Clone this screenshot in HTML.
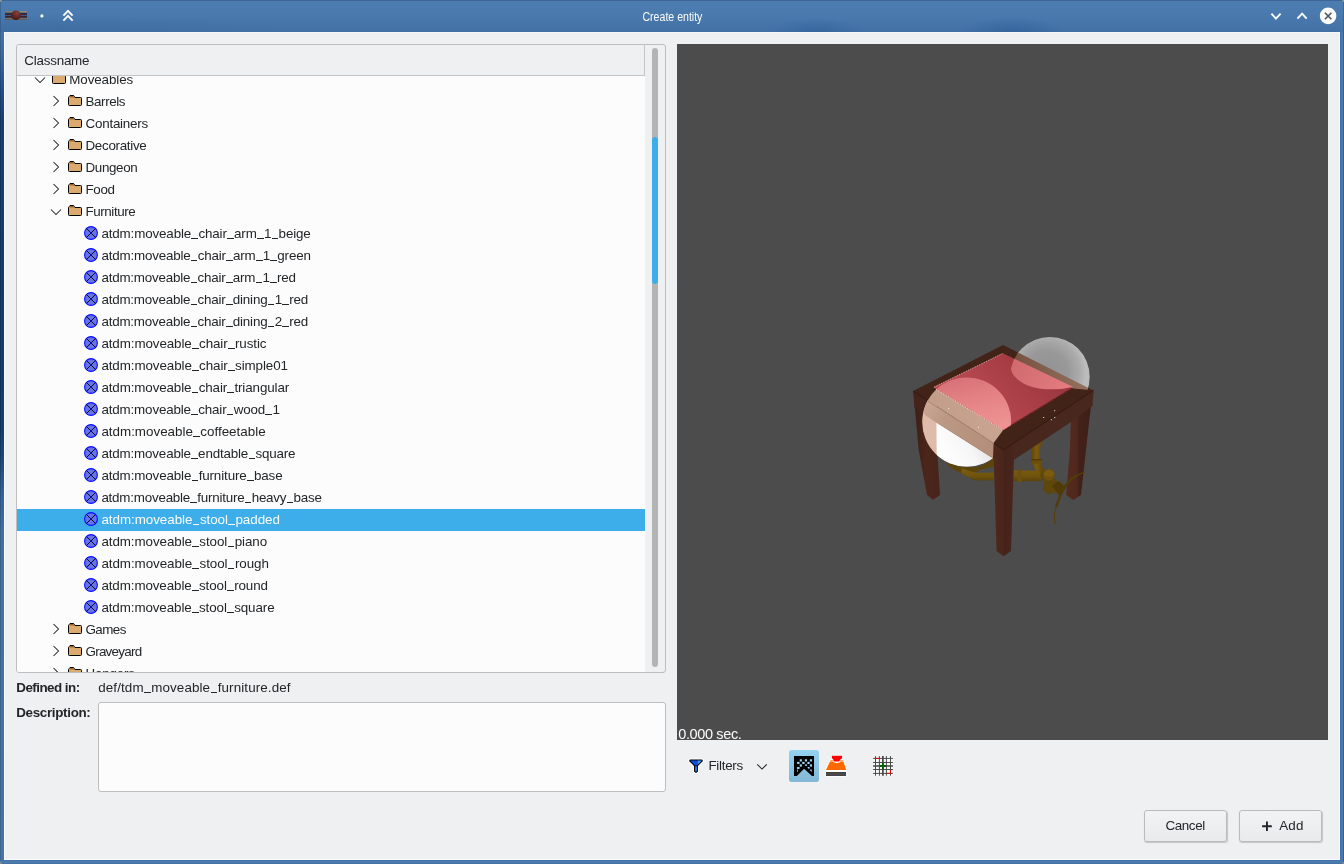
<!DOCTYPE html>
<html>
<head>
<meta charset="utf-8">
<title>Create entity</title>
<style>
html,body{margin:0;padding:0;}
body{width:1344px;height:864px;overflow:hidden;background:#eff0f1;font-family:"Liberation Sans",sans-serif;font-size:13.4px;color:#232629;position:relative;}
.abs{position:absolute;}
#frame{left:0;top:0;width:1344px;height:864px;background:#4877ab;}
#bl{left:0;top:32px;width:4px;height:832px;background:linear-gradient(180deg,#4674a9 0px,#3a679c 25px,#23508a 55px,#163e72 90px,#133a6c 250px,#143c6e 395px,#1d477b 425px,#34639a 465px,#4270a4 500px,#4674a8 832px);}
#bl2{left:0;top:32px;width:1.3px;height:832px;background:rgba(0,0,0,0.13);}
#bb{left:0;top:860px;width:1344px;height:4px;background:linear-gradient(180deg,#3f70a6 0,#4b7db1 45%,#4a7bae 70%,#3f6a99 100%);}
#br{left:1340.2px;top:32px;width:3.8px;height:830px;background:linear-gradient(90deg,#3d6ea6 0,#4679ae 35%,#4a7bb0 60%,#3f6898 100%);}
#titlebar{left:0;top:0;width:1344px;height:32px;background:
radial-gradient(ellipse 46px 15px at 816px 33px,rgba(52,100,158,0.85),rgba(52,100,158,0) 100%),
radial-gradient(ellipse 52px 17px at 1012px 34px,rgba(50,98,156,0.9),rgba(50,98,156,0) 100%),
radial-gradient(ellipse 230px 22px at 60px 36px,rgba(58,103,156,0.55),rgba(58,103,156,0) 100%),
linear-gradient(180deg,#4c7cb0 0%,#4a7aae 40%,#4675aa 75%,#4371a5 100%);}
#titletop{left:0;top:0;width:1344px;height:1px;background:#3d6697;}
#ol{left:0;top:0;width:1px;height:32px;background:rgba(40,70,110,0.35);}
#or{left:1343px;top:0;width:1px;height:864px;background:rgba(40,70,110,0.4);}
.cn{width:2.4px;height:2.4px;}
#client{left:4px;top:32px;width:1336.2px;height:828px;background:#eff0f1;box-sizing:border-box;border:1px solid #fbfbfb;border-top-color:#f6f7f8;}
#title{left:0.1px;top:10.3px;width:1344px;text-align:center;color:#fcfcfc;font-size:12.5px;line-height:15px;}
#title span{display:inline-block;transform:scaleX(0.846);transform-origin:50% 50%;}
/* tree */
#tree{left:16px;top:44px;width:648px;height:627px;border:1px solid #bcbebf;border-radius:3px;background:#eff0f1;overflow:hidden;}
#treebody{left:0;top:31px;width:628px;height:596px;background:#fcfcfc;overflow:hidden;}
#treehead{left:0;top:0;width:627px;height:30px;border-right:1px solid #c2c4c5;border-bottom:1px solid #c2c4c5;background:#eff0f1;}
#treehead span{position:absolute;left:7.25px;top:8px;line-height:16px;}
.row{position:absolute;left:0;width:628px;height:22px;line-height:22px;white-space:nowrap;}
.row.sel{background:#3daee9;color:#fcfcfc;}
.row .t{position:absolute;top:0;}
.row svg{position:absolute;}
.u{font-style:normal;color:transparent;position:relative;}
.u::after{content:"";position:absolute;left:0.35px;width:6.6px;top:11.9px;height:1.1px;background:#232629;}
.sel .u::after{background:#fcfcfc;}
#t_path .u::after{top:11.9px;}
#sbtrack{left:635px;top:3.4px;width:6px;height:619px;border-radius:3px;background:#b3b5b5;}
#sbthumb{left:635px;top:92px;width:6px;height:147px;border-radius:3px;background:#3daee9;}
/* lower-left */
.lbl{font-weight:bold;line-height:16px;}
#desc{left:98px;top:702px;width:566px;height:88px;border:1px solid #bcbebf;border-radius:3px;background:#fcfcfc;}
/* preview */
#preview{left:677px;top:44px;width:651px;height:696px;background:#4c4c4c;overflow:hidden;}
#sec{left:1.2px;top:682.2px;color:#fcfcfc;font-size:14.5px;line-height:16px;}
/* buttons */
.btn{height:30px;width:81px;box-sizing:content-box;border:1px solid #b9bbbc;border-radius:3px;background:linear-gradient(180deg,#f2f3f4,#e9eaeb);box-shadow:0.5px 1px 1px rgba(0,0,0,0.18);line-height:30px;text-align:center;}
/*FIT*/#t_class{letter-spacing:-0.217px;}#t_def{letter-spacing:-0.534px;}#t_path{letter-spacing:0.108px;}#t_desc{letter-spacing:-0.325px;}#t_cancel{letter-spacing:-0.378px;}#t_add{letter-spacing:0.236px;}#t_filters{letter-spacing:-0.276px;}#sec{letter-spacing:-0.358px;}/*ENDFIT*/
</style>
</head>
<body>
<div id="frame" class="abs"></div>
<div id="all" class="abs" style="left:0;top:0;width:1344px;height:864px;will-change:transform;">
<div id="bl" class="abs"></div><div id="bl2" class="abs"></div><div id="br" class="abs"></div><div id="bb" class="abs"></div>
<div id="titlebar" class="abs"></div>
<div id="titletop" class="abs"></div>
<div id="ol" class="abs"></div><div id="or" class="abs"></div>
<div class="abs cn" style="left:0;top:0;background:radial-gradient(circle at 0 0,#9a958e 0,#9a958e 40%,rgba(154,149,142,0) 100%);"></div>
<div class="abs cn" style="left:1341.6px;top:0;background:radial-gradient(circle at 100% 0,#9a958e 0,#9a958e 40%,rgba(154,149,142,0) 100%);"></div>
<div class="abs cn" style="left:0;top:861.6px;background:radial-gradient(circle at 0 100%,#8e8a84 0,#8e8a84 40%,rgba(142,138,132,0) 100%);"></div>
<div class="abs cn" style="left:1341.6px;top:861.6px;background:radial-gradient(circle at 100% 100%,#8e8a84 0,#8e8a84 40%,rgba(142,138,132,0) 100%);"></div>
<div id="client" class="abs"></div>
<svg class="abs" style="left:0;top:0" width="1344" height="32" viewBox="0 0 1344 32">
<defs><radialGradient id="ball" cx="0.6" cy="0.25" r="0.8"><stop offset="0" stop-color="#87423d"/><stop offset="0.45" stop-color="#6a2c29"/><stop offset="1" stop-color="#3f1614"/></radialGradient></defs>
<g>
<rect x="5.2" y="11" width="21.7" height="8.9" fill="#343a52"/>
<rect x="5.2" y="11" width="21.7" height="1.95" fill="#73746e"/>
<rect x="5.2" y="11" width="21.7" height="0.7" fill="#7f807a"/>
<rect x="20.3" y="11" width="6.6" height="1.3" fill="#8c8c85"/>
<rect x="5.2" y="17.7" width="21.7" height="2.2" fill="#70716b"/>
<rect x="5.2" y="19.3" width="21.7" height="0.6" fill="#575853"/>
<rect x="5.2" y="12.95" width="21.7" height="1.1" fill="#262e4a"/>
<rect x="5.2" y="14.05" width="21.7" height="0.85" fill="#4d1c23"/>
<rect x="5.2" y="14.9" width="21.7" height="1.1" fill="#3a588c"/>
<rect x="5.2" y="16" width="21.7" height="0.95" fill="#4d1c23"/>
<rect x="5.2" y="16.95" width="21.7" height="0.75" fill="#2b3654"/>
<circle cx="15.9" cy="15.3" r="4.75" fill="url(#ball)"/>
</g>
<circle cx="41.9" cy="15.9" r="1.6" fill="#fcfcfc"/>
<path d="M63.4 15.6 L68 10.9 L72.6 15.6 M63.4 20.6 L68 15.9 L72.6 20.6" stroke="#fcfcfc" stroke-width="1.9" fill="none"/>
<path d="M1271.4 13.6 L1275.9 18.6 L1280.6 13.6" stroke="#fcfcfc" stroke-width="1.9" fill="none"/>
<path d="M1297.4 18.6 L1302.1 13.7 L1306.7 18.6" stroke="#fcfcfc" stroke-width="1.9" fill="none"/>
<circle cx="1328.1" cy="15.9" r="8.3" fill="#fcfcfc"/>
<path d="M1324.9 12.8 L1331.4 19.2 M1331.4 12.8 L1324.9 19.2" stroke="#4d5054" stroke-width="1.6" fill="none"/>
</svg>
<div id="title" class="abs"><span>Create entity</span></div>

<div id="tree" class="abs">
  <div id="treebody" class="abs"><!--ROWS-->
<div class="row" style="top:-7px"><svg style="left:17.200000000000003px;top:6.5px" width="12" height="8" viewBox="0 0 12 8"><path d="M1 1.5 L6 6.5 L11 1.5" stroke="#232629" stroke-width="1.05" fill="none"/></svg><svg style="left:34.5px;top:4px" width="14" height="12" viewBox="0 0 14 12"><path d="M0.5 2.6 Q0.5 2 1.2 1.6 L2 0.5 H5.6 L6.9 2.5 H12.6 Q13.5 2.5 13.5 3.4 V9.6 Q13.5 10.5 12.6 10.5 H1.4 Q0.5 10.5 0.5 9.6 Z" fill="#dcaa6e" stroke="#000" stroke-width="1"/><path d="M1.6 2.2 L2.4 1.1 H5.3 L6.2 2.6 H1.6 Z" fill="#9c6424"/></svg><span class="t" style="left:52.25px;letter-spacing:-0.096px">Moveables</span></div>
<div class="row" style="top:15px"><svg style="left:35.1px;top:4px" width="8" height="12" viewBox="0 0 8 12"><path d="M1.5 1 L6.5 6 L1.5 11" stroke="#232629" stroke-width="1.05" fill="none"/></svg><svg style="left:51px;top:4px" width="14" height="12" viewBox="0 0 14 12"><path d="M0.5 2.6 Q0.5 2 1.2 1.6 L2 0.5 H5.6 L6.9 2.5 H12.6 Q13.5 2.5 13.5 3.4 V9.6 Q13.5 10.5 12.6 10.5 H1.4 Q0.5 10.5 0.5 9.6 Z" fill="#dcaa6e" stroke="#000" stroke-width="1"/><path d="M1.6 2.2 L2.4 1.1 H5.3 L6.2 2.6 H1.6 Z" fill="#9c6424"/></svg><span class="t" style="left:68.50px;letter-spacing:-0.404px">Barrels</span></div>
<div class="row" style="top:37px"><svg style="left:35.1px;top:4px" width="8" height="12" viewBox="0 0 8 12"><path d="M1.5 1 L6.5 6 L1.5 11" stroke="#232629" stroke-width="1.05" fill="none"/></svg><svg style="left:51px;top:4px" width="14" height="12" viewBox="0 0 14 12"><path d="M0.5 2.6 Q0.5 2 1.2 1.6 L2 0.5 H5.6 L6.9 2.5 H12.6 Q13.5 2.5 13.5 3.4 V9.6 Q13.5 10.5 12.6 10.5 H1.4 Q0.5 10.5 0.5 9.6 Z" fill="#dcaa6e" stroke="#000" stroke-width="1"/><path d="M1.6 2.2 L2.4 1.1 H5.3 L6.2 2.6 H1.6 Z" fill="#9c6424"/></svg><span class="t" style="left:68.50px;letter-spacing:-0.224px">Containers</span></div>
<div class="row" style="top:59px"><svg style="left:35.1px;top:4px" width="8" height="12" viewBox="0 0 8 12"><path d="M1.5 1 L6.5 6 L1.5 11" stroke="#232629" stroke-width="1.05" fill="none"/></svg><svg style="left:51px;top:4px" width="14" height="12" viewBox="0 0 14 12"><path d="M0.5 2.6 Q0.5 2 1.2 1.6 L2 0.5 H5.6 L6.9 2.5 H12.6 Q13.5 2.5 13.5 3.4 V9.6 Q13.5 10.5 12.6 10.5 H1.4 Q0.5 10.5 0.5 9.6 Z" fill="#dcaa6e" stroke="#000" stroke-width="1"/><path d="M1.6 2.2 L2.4 1.1 H5.3 L6.2 2.6 H1.6 Z" fill="#9c6424"/></svg><span class="t" style="left:68.50px;letter-spacing:-0.307px">Decorative</span></div>
<div class="row" style="top:81px"><svg style="left:35.1px;top:4px" width="8" height="12" viewBox="0 0 8 12"><path d="M1.5 1 L6.5 6 L1.5 11" stroke="#232629" stroke-width="1.05" fill="none"/></svg><svg style="left:51px;top:4px" width="14" height="12" viewBox="0 0 14 12"><path d="M0.5 2.6 Q0.5 2 1.2 1.6 L2 0.5 H5.6 L6.9 2.5 H12.6 Q13.5 2.5 13.5 3.4 V9.6 Q13.5 10.5 12.6 10.5 H1.4 Q0.5 10.5 0.5 9.6 Z" fill="#dcaa6e" stroke="#000" stroke-width="1"/><path d="M1.6 2.2 L2.4 1.1 H5.3 L6.2 2.6 H1.6 Z" fill="#9c6424"/></svg><span class="t" style="left:68.50px;letter-spacing:-0.352px">Dungeon</span></div>
<div class="row" style="top:103px"><svg style="left:35.1px;top:4px" width="8" height="12" viewBox="0 0 8 12"><path d="M1.5 1 L6.5 6 L1.5 11" stroke="#232629" stroke-width="1.05" fill="none"/></svg><svg style="left:51px;top:4px" width="14" height="12" viewBox="0 0 14 12"><path d="M0.5 2.6 Q0.5 2 1.2 1.6 L2 0.5 H5.6 L6.9 2.5 H12.6 Q13.5 2.5 13.5 3.4 V9.6 Q13.5 10.5 12.6 10.5 H1.4 Q0.5 10.5 0.5 9.6 Z" fill="#dcaa6e" stroke="#000" stroke-width="1"/><path d="M1.6 2.2 L2.4 1.1 H5.3 L6.2 2.6 H1.6 Z" fill="#9c6424"/></svg><span class="t" style="left:68.50px;letter-spacing:-0.344px">Food</span></div>
<div class="row" style="top:125px"><svg style="left:32.7px;top:6.5px" width="12" height="8" viewBox="0 0 12 8"><path d="M1 1.5 L6 6.5 L11 1.5" stroke="#232629" stroke-width="1.05" fill="none"/></svg><svg style="left:51px;top:4px" width="14" height="12" viewBox="0 0 14 12"><path d="M0.5 2.6 Q0.5 2 1.2 1.6 L2 0.5 H5.6 L6.9 2.5 H12.6 Q13.5 2.5 13.5 3.4 V9.6 Q13.5 10.5 12.6 10.5 H1.4 Q0.5 10.5 0.5 9.6 Z" fill="#dcaa6e" stroke="#000" stroke-width="1"/><path d="M1.6 2.2 L2.4 1.1 H5.3 L6.2 2.6 H1.6 Z" fill="#9c6424"/></svg><span class="t" style="left:68.50px;letter-spacing:-0.418px">Furniture</span></div>
<div class="row" style="top:147px"><svg style="left:67px;top:3px" width="14" height="14" viewBox="0 0 14 14"><circle cx="7" cy="7" r="6.4" fill="#6674ea" stroke="#0a0aff" stroke-width="1.1"/><path d="M2.6 2.6 L11.4 11.4 M11.4 2.6 L2.6 11.4" stroke="#000" stroke-width="0.9" fill="none"/><rect x="6.3" y="6.3" width="1.4" height="1.4" fill="#0a0aff"/></svg><span class="t" style="left:84.40px;letter-spacing:-0.143px">atdm:moveable<i class="u">_</i>chair<i class="u">_</i>arm<i class="u">_</i>1<i class="u">_</i>beige</span></div>
<div class="row" style="top:169px"><svg style="left:67px;top:3px" width="14" height="14" viewBox="0 0 14 14"><circle cx="7" cy="7" r="6.4" fill="#6674ea" stroke="#0a0aff" stroke-width="1.1"/><path d="M2.6 2.6 L11.4 11.4 M11.4 2.6 L2.6 11.4" stroke="#000" stroke-width="0.9" fill="none"/><rect x="6.3" y="6.3" width="1.4" height="1.4" fill="#0a0aff"/></svg><span class="t" style="left:84.40px;letter-spacing:-0.192px">atdm:moveable<i class="u">_</i>chair<i class="u">_</i>arm<i class="u">_</i>1<i class="u">_</i>green</span></div>
<div class="row" style="top:191px"><svg style="left:67px;top:3px" width="14" height="14" viewBox="0 0 14 14"><circle cx="7" cy="7" r="6.4" fill="#6674ea" stroke="#0a0aff" stroke-width="1.1"/><path d="M2.6 2.6 L11.4 11.4 M11.4 2.6 L2.6 11.4" stroke="#000" stroke-width="0.9" fill="none"/><rect x="6.3" y="6.3" width="1.4" height="1.4" fill="#0a0aff"/></svg><span class="t" style="left:84.40px;letter-spacing:-0.203px">atdm:moveable<i class="u">_</i>chair<i class="u">_</i>arm<i class="u">_</i>1<i class="u">_</i>red</span></div>
<div class="row" style="top:213px"><svg style="left:67px;top:3px" width="14" height="14" viewBox="0 0 14 14"><circle cx="7" cy="7" r="6.4" fill="#6674ea" stroke="#0a0aff" stroke-width="1.1"/><path d="M2.6 2.6 L11.4 11.4 M11.4 2.6 L2.6 11.4" stroke="#000" stroke-width="0.9" fill="none"/><rect x="6.3" y="6.3" width="1.4" height="1.4" fill="#0a0aff"/></svg><span class="t" style="left:84.40px;letter-spacing:-0.202px">atdm:moveable<i class="u">_</i>chair<i class="u">_</i>dining<i class="u">_</i>1<i class="u">_</i>red</span></div>
<div class="row" style="top:235px"><svg style="left:67px;top:3px" width="14" height="14" viewBox="0 0 14 14"><circle cx="7" cy="7" r="6.4" fill="#6674ea" stroke="#0a0aff" stroke-width="1.1"/><path d="M2.6 2.6 L11.4 11.4 M11.4 2.6 L2.6 11.4" stroke="#000" stroke-width="0.9" fill="none"/><rect x="6.3" y="6.3" width="1.4" height="1.4" fill="#0a0aff"/></svg><span class="t" style="left:84.40px;letter-spacing:-0.202px">atdm:moveable<i class="u">_</i>chair<i class="u">_</i>dining<i class="u">_</i>2<i class="u">_</i>red</span></div>
<div class="row" style="top:257px"><svg style="left:67px;top:3px" width="14" height="14" viewBox="0 0 14 14"><circle cx="7" cy="7" r="6.4" fill="#6674ea" stroke="#0a0aff" stroke-width="1.1"/><path d="M2.6 2.6 L11.4 11.4 M11.4 2.6 L2.6 11.4" stroke="#000" stroke-width="0.9" fill="none"/><rect x="6.3" y="6.3" width="1.4" height="1.4" fill="#0a0aff"/></svg><span class="t" style="left:84.40px;letter-spacing:-0.096px">atdm:moveable<i class="u">_</i>chair<i class="u">_</i>rustic</span></div>
<div class="row" style="top:279px"><svg style="left:67px;top:3px" width="14" height="14" viewBox="0 0 14 14"><circle cx="7" cy="7" r="6.4" fill="#6674ea" stroke="#0a0aff" stroke-width="1.1"/><path d="M2.6 2.6 L11.4 11.4 M11.4 2.6 L2.6 11.4" stroke="#000" stroke-width="0.9" fill="none"/><rect x="6.3" y="6.3" width="1.4" height="1.4" fill="#0a0aff"/></svg><span class="t" style="left:84.40px;letter-spacing:-0.092px">atdm:moveable<i class="u">_</i>chair<i class="u">_</i>simple01</span></div>
<div class="row" style="top:301px"><svg style="left:67px;top:3px" width="14" height="14" viewBox="0 0 14 14"><circle cx="7" cy="7" r="6.4" fill="#6674ea" stroke="#0a0aff" stroke-width="1.1"/><path d="M2.6 2.6 L11.4 11.4 M11.4 2.6 L2.6 11.4" stroke="#000" stroke-width="0.9" fill="none"/><rect x="6.3" y="6.3" width="1.4" height="1.4" fill="#0a0aff"/></svg><span class="t" style="left:84.40px;letter-spacing:-0.122px">atdm:moveable<i class="u">_</i>chair<i class="u">_</i>triangular</span></div>
<div class="row" style="top:323px"><svg style="left:67px;top:3px" width="14" height="14" viewBox="0 0 14 14"><circle cx="7" cy="7" r="6.4" fill="#6674ea" stroke="#0a0aff" stroke-width="1.1"/><path d="M2.6 2.6 L11.4 11.4 M11.4 2.6 L2.6 11.4" stroke="#000" stroke-width="0.9" fill="none"/><rect x="6.3" y="6.3" width="1.4" height="1.4" fill="#0a0aff"/></svg><span class="t" style="left:84.40px;letter-spacing:-0.157px">atdm:moveable<i class="u">_</i>chair<i class="u">_</i>wood<i class="u">_</i>1</span></div>
<div class="row" style="top:345px"><svg style="left:67px;top:3px" width="14" height="14" viewBox="0 0 14 14"><circle cx="7" cy="7" r="6.4" fill="#6674ea" stroke="#0a0aff" stroke-width="1.1"/><path d="M2.6 2.6 L11.4 11.4 M11.4 2.6 L2.6 11.4" stroke="#000" stroke-width="0.9" fill="none"/><rect x="6.3" y="6.3" width="1.4" height="1.4" fill="#0a0aff"/></svg><span class="t" style="left:84.40px;letter-spacing:-0.004px">atdm:moveable<i class="u">_</i>coffeetable</span></div>
<div class="row" style="top:367px"><svg style="left:67px;top:3px" width="14" height="14" viewBox="0 0 14 14"><circle cx="7" cy="7" r="6.4" fill="#6674ea" stroke="#0a0aff" stroke-width="1.1"/><path d="M2.6 2.6 L11.4 11.4 M11.4 2.6 L2.6 11.4" stroke="#000" stroke-width="0.9" fill="none"/><rect x="6.3" y="6.3" width="1.4" height="1.4" fill="#0a0aff"/></svg><span class="t" style="left:84.40px;letter-spacing:-0.165px">atdm:moveable<i class="u">_</i>endtable<i class="u">_</i>square</span></div>
<div class="row" style="top:389px"><svg style="left:67px;top:3px" width="14" height="14" viewBox="0 0 14 14"><circle cx="7" cy="7" r="6.4" fill="#6674ea" stroke="#0a0aff" stroke-width="1.1"/><path d="M2.6 2.6 L11.4 11.4 M11.4 2.6 L2.6 11.4" stroke="#000" stroke-width="0.9" fill="none"/><rect x="6.3" y="6.3" width="1.4" height="1.4" fill="#0a0aff"/></svg><span class="t" style="left:84.40px;letter-spacing:-0.127px">atdm:moveable<i class="u">_</i>furniture<i class="u">_</i>base</span></div>
<div class="row" style="top:411px"><svg style="left:67px;top:3px" width="14" height="14" viewBox="0 0 14 14"><circle cx="7" cy="7" r="6.4" fill="#6674ea" stroke="#0a0aff" stroke-width="1.1"/><path d="M2.6 2.6 L11.4 11.4 M11.4 2.6 L2.6 11.4" stroke="#000" stroke-width="0.9" fill="none"/><rect x="6.3" y="6.3" width="1.4" height="1.4" fill="#0a0aff"/></svg><span class="t" style="left:84.40px;letter-spacing:-0.222px">atdm:moveable<i class="u">_</i>furniture<i class="u">_</i>heavy<i class="u">_</i>base</span></div>
<div class="row sel" style="top:433px"><svg style="left:67px;top:3px" width="14" height="14" viewBox="0 0 14 14"><circle cx="7" cy="7" r="6.4" fill="#6674ea" stroke="#0a0aff" stroke-width="1.1"/><path d="M2.6 2.6 L11.4 11.4 M11.4 2.6 L2.6 11.4" stroke="#000" stroke-width="0.9" fill="none"/><rect x="6.3" y="6.3" width="1.4" height="1.4" fill="#0a0aff"/></svg><span class="t" style="left:84.40px;letter-spacing:-0.038px">atdm:moveable<i class="u">_</i>stool<i class="u">_</i>padded</span></div>
<div class="row" style="top:455px"><svg style="left:67px;top:3px" width="14" height="14" viewBox="0 0 14 14"><circle cx="7" cy="7" r="6.4" fill="#6674ea" stroke="#0a0aff" stroke-width="1.1"/><path d="M2.6 2.6 L11.4 11.4 M11.4 2.6 L2.6 11.4" stroke="#000" stroke-width="0.9" fill="none"/><rect x="6.3" y="6.3" width="1.4" height="1.4" fill="#0a0aff"/></svg><span class="t" style="left:84.40px;letter-spacing:-0.076px">atdm:moveable<i class="u">_</i>stool<i class="u">_</i>piano</span></div>
<div class="row" style="top:477px"><svg style="left:67px;top:3px" width="14" height="14" viewBox="0 0 14 14"><circle cx="7" cy="7" r="6.4" fill="#6674ea" stroke="#0a0aff" stroke-width="1.1"/><path d="M2.6 2.6 L11.4 11.4 M11.4 2.6 L2.6 11.4" stroke="#000" stroke-width="0.9" fill="none"/><rect x="6.3" y="6.3" width="1.4" height="1.4" fill="#0a0aff"/></svg><span class="t" style="left:84.40px;letter-spacing:-0.063px">atdm:moveable<i class="u">_</i>stool<i class="u">_</i>rough</span></div>
<div class="row" style="top:499px"><svg style="left:67px;top:3px" width="14" height="14" viewBox="0 0 14 14"><circle cx="7" cy="7" r="6.4" fill="#6674ea" stroke="#0a0aff" stroke-width="1.1"/><path d="M2.6 2.6 L11.4 11.4 M11.4 2.6 L2.6 11.4" stroke="#000" stroke-width="0.9" fill="none"/><rect x="6.3" y="6.3" width="1.4" height="1.4" fill="#0a0aff"/></svg><span class="t" style="left:84.40px;letter-spacing:-0.101px">atdm:moveable<i class="u">_</i>stool<i class="u">_</i>round</span></div>
<div class="row" style="top:521px"><svg style="left:67px;top:3px" width="14" height="14" viewBox="0 0 14 14"><circle cx="7" cy="7" r="6.4" fill="#6674ea" stroke="#0a0aff" stroke-width="1.1"/><path d="M2.6 2.6 L11.4 11.4 M11.4 2.6 L2.6 11.4" stroke="#000" stroke-width="0.9" fill="none"/><rect x="6.3" y="6.3" width="1.4" height="1.4" fill="#0a0aff"/></svg><span class="t" style="left:84.40px;letter-spacing:-0.101px">atdm:moveable<i class="u">_</i>stool<i class="u">_</i>square</span></div>
<div class="row" style="top:543px"><svg style="left:35.1px;top:4px" width="8" height="12" viewBox="0 0 8 12"><path d="M1.5 1 L6.5 6 L1.5 11" stroke="#232629" stroke-width="1.05" fill="none"/></svg><svg style="left:51px;top:4px" width="14" height="12" viewBox="0 0 14 12"><path d="M0.5 2.6 Q0.5 2 1.2 1.6 L2 0.5 H5.6 L6.9 2.5 H12.6 Q13.5 2.5 13.5 3.4 V9.6 Q13.5 10.5 12.6 10.5 H1.4 Q0.5 10.5 0.5 9.6 Z" fill="#dcaa6e" stroke="#000" stroke-width="1"/><path d="M1.6 2.2 L2.4 1.1 H5.3 L6.2 2.6 H1.6 Z" fill="#9c6424"/></svg><span class="t" style="left:68.50px;letter-spacing:-0.568px">Games</span></div>
<div class="row" style="top:565px"><svg style="left:35.1px;top:4px" width="8" height="12" viewBox="0 0 8 12"><path d="M1.5 1 L6.5 6 L1.5 11" stroke="#232629" stroke-width="1.05" fill="none"/></svg><svg style="left:51px;top:4px" width="14" height="12" viewBox="0 0 14 12"><path d="M0.5 2.6 Q0.5 2 1.2 1.6 L2 0.5 H5.6 L6.9 2.5 H12.6 Q13.5 2.5 13.5 3.4 V9.6 Q13.5 10.5 12.6 10.5 H1.4 Q0.5 10.5 0.5 9.6 Z" fill="#dcaa6e" stroke="#000" stroke-width="1"/><path d="M1.6 2.2 L2.4 1.1 H5.3 L6.2 2.6 H1.6 Z" fill="#9c6424"/></svg><span class="t" style="left:68.50px;letter-spacing:-0.739px">Graveyard</span></div>
<div class="row" style="top:587px"><svg style="left:35.1px;top:4px" width="8" height="12" viewBox="0 0 8 12"><path d="M1.5 1 L6.5 6 L1.5 11" stroke="#232629" stroke-width="1.05" fill="none"/></svg><svg style="left:51px;top:4px" width="14" height="12" viewBox="0 0 14 12"><path d="M0.5 2.6 Q0.5 2 1.2 1.6 L2 0.5 H5.6 L6.9 2.5 H12.6 Q13.5 2.5 13.5 3.4 V9.6 Q13.5 10.5 12.6 10.5 H1.4 Q0.5 10.5 0.5 9.6 Z" fill="#dcaa6e" stroke="#000" stroke-width="1"/><path d="M1.6 2.2 L2.4 1.1 H5.3 L6.2 2.6 H1.6 Z" fill="#9c6424"/></svg><span class="t" style="left:68.50px;letter-spacing:-0.188px">Hangers</span></div>
<!--/ROWS--></div>
  <div id="treehead" class="abs"><span id="t_class">Classname</span></div>
  <div id="sbtrack" class="abs"></div>
  <div id="sbthumb" class="abs"></div>
</div>

<div id="t_def" class="abs lbl" style="left:16.25px;top:680px;">Defined in:</div>
<div id="t_path" class="abs" style="left:98.25px;top:680px;line-height:16px;">def/tdm<i class="u">_</i>moveable<i class="u">_</i>furniture.def</div>
<div id="t_desc" class="abs lbl" style="left:16.25px;top:705px;">Description:</div>
<div id="desc" class="abs"></div>

<div id="preview" class="abs">
  <!--MODEL-->
<svg class="abs" style="left:0;top:0" width="651" height="696" viewBox="677 44 651 696">
<defs>
<linearGradient id="cush" gradientUnits="userSpaceOnUse" x1="1045" y1="350" x2="960" y2="425"><stop offset="0" stop-color="#98353d"/><stop offset="0.45" stop-color="#ac4048"/><stop offset="1" stop-color="#bf4f56"/></linearGradient>
<linearGradient id="legF" gradientUnits="userSpaceOnUse" x1="993" y1="0" x2="1015" y2="0"><stop offset="0" stop-color="#50291d"/><stop offset="0.46" stop-color="#4b251a"/><stop offset="0.54" stop-color="#44221a"/><stop offset="1" stop-color="#4a261d"/></linearGradient>
<linearGradient id="legL" gradientUnits="userSpaceOnUse" x1="915" y1="0" x2="940" y2="0"><stop offset="0" stop-color="#3f1f17"/><stop offset="0.5" stop-color="#4c261b"/><stop offset="1" stop-color="#47231a"/></linearGradient>
<linearGradient id="legR" gradientUnits="userSpaceOnUse" x1="1067" y1="0" x2="1089" y2="0"><stop offset="0" stop-color="#562a1f"/><stop offset="0.45" stop-color="#4e271d"/><stop offset="0.55" stop-color="#43211a"/><stop offset="1" stop-color="#3e1f18"/></linearGradient>
<radialGradient id="sphR" gradientUnits="userSpaceOnUse" cx="1046" cy="372" r="40"><stop offset="0" stop-color="#919191"/><stop offset="0.55" stop-color="#999999"/><stop offset="0.85" stop-color="#acacac"/><stop offset="1" stop-color="#bcbcbc"/></radialGradient>
<linearGradient id="sphRrail" gradientUnits="userSpaceOnUse" x1="1012" y1="0" x2="1088" y2="0"><stop offset="0" stop-color="#76513f"/><stop offset="1" stop-color="#94705f"/></linearGradient>
<linearGradient id="sphRc" gradientUnits="userSpaceOnUse" x1="1012" y1="362" x2="1068" y2="390"><stop offset="0" stop-color="#cf6a6f"/><stop offset="1" stop-color="#e47c80"/></linearGradient>
<linearGradient id="sphLc" gradientUnits="userSpaceOnUse" x1="975" y1="378" x2="985" y2="428"><stop offset="0" stop-color="#d9757a"/><stop offset="0.5" stop-color="#e68588"/><stop offset="1" stop-color="#ee9292"/></linearGradient>
<linearGradient id="sphLrail" gradientUnits="userSpaceOnUse" x1="930" y1="0" x2="1000" y2="0"><stop offset="0" stop-color="#c29e8a"/><stop offset="1" stop-color="#c9a591"/></linearGradient>
<linearGradient id="sphLapr" gradientUnits="userSpaceOnUse" x1="922" y1="400" x2="990" y2="450"><stop offset="0" stop-color="#cdaa98"/><stop offset="0.35" stop-color="#bb9884"/><stop offset="1" stop-color="#b4907b"/></linearGradient>
<linearGradient id="white" gradientUnits="userSpaceOnUse" x1="988" y1="442" x2="946" y2="466"><stop offset="0" stop-color="#e2e2e2"/><stop offset="0.4" stop-color="#f6f6f6"/><stop offset="1" stop-color="#ffffff"/></linearGradient>
<linearGradient id="brass" gradientUnits="userSpaceOnUse" x1="0" y1="470" x2="0" y2="482"><stop offset="0" stop-color="#7a5b0f"/><stop offset="0.5" stop-color="#70530d"/><stop offset="1" stop-color="#564009"/></linearGradient>
<linearGradient id="brassV" gradientUnits="userSpaceOnUse" x1="1031" y1="0" x2="1042" y2="0"><stop offset="0" stop-color="#5e450a"/><stop offset="0.5" stop-color="#7b5c0f"/><stop offset="1" stop-color="#63490b"/></linearGradient>
<clipPath id="cR"><circle cx="1049.9" cy="376.7" r="39.8"/></clipPath>
<clipPath id="cL"><circle cx="966.8" cy="422" r="44.6"/></clipPath>
</defs>
<!-- brass braces (behind legs) -->
<g>
<path d="M945.6 459.2 Q950 463.5 955.6 465.6 Q965 468.2 977.8 467 Q986 465 992.6 458.5 L994 459 V472 H975 L975 480.5 Q960 473.5 948.4 465.8 Z" fill="#5c440a"/>
<path d="M961 473.3 Q968 477.5 977.8 480.5 H994 V472.6 H975 Q968 471 962 468 Z" fill="url(#brass)"/>
<path d="M979.5 469.8 L994 466.6 L994 472.5 L976.5 472.5 Z" fill="#4c4c4c"/>
<path d="M1012 470.6 H1042 V481.2 H1012 Z" fill="url(#brass)"/>
<rect x="1017.6" y="469.6" width="3.8" height="12.4" fill="#6c500d"/>
<path d="M1035.8 440 L1031.7 447.8 L1031.3 461.7 L1034.4 468.6 L1041.4 475.6 L1047 471.6 L1042.1 467.2 L1039.4 460.3 L1040 447.8 L1043.6 440 Z" fill="url(#brassV)"/>
<path d="M1031 459.2 H1041.6 L1041.8 463.4 H1031.2 Z" fill="#6a4e0c"/><path d="M1031 459.2 H1041.6 V460.2 H1031 Z" fill="#4a3607"/>
<path d="M1040 475.6 L1044 471 L1055.3 479.7 L1062.2 483.2 L1065.2 486.7 L1059.6 495.6 L1055.3 492.2 L1048.3 494.3 L1042.8 489.4 L1044.2 481.1 Z" fill="#5f460b"/>
<path d="M1052 486 L1059.6 495.6 L1065.2 486.7 L1058 481 Z" fill="#503a08"/>
<circle cx="1048.9" cy="474.8" r="5.9" fill="#6e520d"/>
<ellipse cx="1048.9" cy="473.4" rx="5" ry="3.5" fill="#7a5b10"/>
</g>
<!-- right leg -->
<path d="M1070.8 420 L1092.9 392 L1089.3 420 L1086 450 L1081 495 L1073.3 500 L1066.1 495 L1069.9 450 Z" fill="url(#legR)"/>
<!-- wire in front of right leg -->
<path d="M1084.4 472 Q1072 477 1065.4 485.8 Q1057.6 498 1054.2 515.6 L1055.1 523.4" stroke="#574109" stroke-width="1.2" fill="none" stroke-linecap="round"/><path d="M1076 475.4 Q1069.5 480 1065.4 485.8 Q1059.6 495 1056.4 506" stroke="#503c09" stroke-width="2.4" fill="none" stroke-linecap="round"/>
<!-- left leg -->
<path d="M913.4 392 L935 400 L937.5 455 L940 495 L933 499.8 L927 495 L918.7 450 Z" fill="url(#legL)"/>
<!-- aprons -->
<path d="M913.2 391.1 L1003.6 449.5 L1003.6 466 L993 458.3 L936.1 422.4 L914.5 408 Z" fill="#43231a"/>
<path d="M1003.6 449.5 L1093.5 390.4 L1092.6 406 L1069.9 422.8 L1014.3 459.6 L1003.6 466 Z" fill="#48281e"/>
<!-- front leg -->
<path d="M993.3 442 L1003.6 449.5 L1014.5 443 L1011 551 L1003.5 556.2 L996.5 551 Z" fill="url(#legF)"/>
<!-- frame top -->
<path d="M913.2 391.1 L1003 345 L1093.5 390.4 L1003.6 449.8 Z" fill="#422318"/>
<path d="M913.2 391.1 L1003.6 449.8 L1093.5 390.4" stroke="#34190f" stroke-width="1" fill="none"/>
<!-- cushion -->
<path d="M933.3 387.2 L1002.8 353.3 L1073.3 387 L1003.2 429.9 Z" fill="url(#cush)"/>
<path d="M1003.2 429.9 L1073.3 387" stroke="#8a2a35" stroke-width="1.4" stroke-dasharray="1.5 1.5" fill="none"/>
<path d="M934.2 387 L1002.4 353.6" stroke="#e9c9c9" stroke-width="0.8" stroke-dasharray="1.3 1.2" fill="none" opacity="0.85"/>
<!-- right sphere -->
<g clip-path="url(#cR)">
<path d="M1003 347 L1093.5 392.4 L1100 392 L1100 300 L1000 300 Z" fill="url(#sphR)"/>
<path d="M1003 345 L1093.5 390.4 L1073.3 388.5 L1002.8 354.8 Z" fill="url(#sphRrail)"/>
<path d="M1002.8 353.3 L1073.3 387 L1069.7 387.4 Q1057 390.6 1038.9 388.4 Q1027 386 1021.1 381.9 Q1014 377 1012.2 373 Q1010.2 368 1010.9 364 L1005 356 Z" fill="url(#sphRc)"/>
</g>
<!-- left sphere -->
<g clip-path="url(#cL)">
<path d="M913 392 L936.5 404 L936.5 422.4 L993 458.3 L993.3 470 L920 470 Z" fill="#dfbbab"/>
<path d="M936.4 422.6 L993 458.5 L993.2 470 L936.8 470 Z" fill="url(#white)"/>
<path d="M913.2 391.1 L993.6 443 L993 458.3 L936.1 422.4 L925 415 L918 400 Z" fill="url(#sphLapr)"/>
<path d="M913.2 391.1 L933.3 387.2 L1003.2 429.9 L993.6 443 Z" fill="url(#sphLrail)"/>
<path d="M913.2 391.6 L993.6 443.5" stroke="#a88671" stroke-width="1" fill="none"/>
<path d="M933.3 387.2 L1002.8 353.3 L1011.2 370 L1011.2 425 L1003.2 429.9 Z" fill="url(#sphLc)"/>
</g>
<path d="M936 389.3 L1003 430" stroke="#f8e4e4" stroke-width="0.9" stroke-dasharray="1.2 1.6" fill="none" opacity="0.9"/>
<!-- specks -->
<g fill="#f0f0f0"><rect x="1054.2" y="410.2" width="1" height="1"/><rect x="1043.2" y="417" width="1" height="1"/><rect x="1050.8" y="419.2" width="1" height="1"/><rect x="1054.2" y="417" width="1" height="1"/><rect x="948.2" y="408" width="1" height="1"/><rect x="978" y="426.8" width="1" height="1"/></g>
</svg>
<!--/MODEL-->
  <div id="sec" class="abs">0.000 sec.</div>
</div>

<svg class="abs" style="left:680px;top:744px" width="230" height="46" viewBox="680 744 230 46">
<defs>
<linearGradient id="actbg" x1="0" y1="0" x2="0" y2="1"><stop offset="0" stop-color="#94d2ef"/><stop offset="1" stop-color="#84b7d6"/></linearGradient>
<linearGradient id="fun" x1="0" y1="0" x2="1" y2="0"><stop offset="0" stop-color="#0a55ea"/><stop offset="0.6" stop-color="#0848d8"/><stop offset="0.72" stop-color="#3f9cff"/><stop offset="1" stop-color="#3f9cff"/></linearGradient>
<clipPath id="flagclip"><path d="M2.2 2.2 H14.6 V13.2 L8.1 7.6 L2.2 13.4 Z"/></clipPath>
</defs>
<!-- filter funnel -->
<path d="M689.6 759.2 H702.4 L703.3 760.9 L698.3 765.9 V771.6 L696 773.4 L693.7 771.6 V765.9 L688.7 760.9 Z" fill="#fff" stroke="#fff" stroke-width="1.4" stroke-linejoin="round"/>
<path d="M689.9 759.5 H702.1 L703 760.9 L698 765.9 V771.4 L696 772.9 L694 771.4 V765.9 L689 760.9 Z" fill="#000"/>
<path d="M690.2 760.4 H701.8 L697 765.6 H695 Z" fill="url(#fun)"/>
<rect x="695.1" y="766.2" width="1.8" height="5.3" fill="#2b7bf5"/>
<!-- dropdown chevron -->
<path d="M757.2 764.3 L762 769.1 L766.8 764.3" stroke="#232629" stroke-width="1.05" fill="none"/>
<!-- active button -->
<rect x="789" y="750" width="30" height="32" rx="2.5" fill="url(#actbg)"/>
<g transform="translate(794 756) scale(1.25)">
<path d="M0 0 H16 V16 H14.4 L8.1 10.1 L2.3 16 H0 Z" fill="#000"/>
<g clip-path="url(#flagclip)" fill="#9bd6f3">
<rect x="4.6" y="2.6" width="1.7" height="1.8"/><rect x="8.7" y="2.6" width="1.7" height="1.8"/><rect x="12.7" y="2.6" width="1.7" height="1.8"/>
<rect x="2.5" y="4.7" width="1.9" height="1.7"/><rect x="6.6" y="4.7" width="1.9" height="1.7"/><rect x="10.7" y="4.7" width="1.8" height="1.7"/>
<rect x="4.6" y="6.7" width="1.7" height="1.8"/><rect x="8.9" y="6.7" width="1.5" height="1.2"/><rect x="12.7" y="6.7" width="1.7" height="1.8"/>
<rect x="2.5" y="8.8" width="1.9" height="1.6"/><rect x="10.9" y="8.8" width="1.6" height="1.3"/>
<rect x="12.9" y="10.8" width="1.3" height="1.8"/><rect x="2.5" y="10.8" width="0.6" height="2.2"/>
</g>
</g>
<!-- cone / lighting -->
<rect x="825.4" y="769.6" width="21.2" height="7.2" fill="#fcfeff"/>
<path d="M831.3 755 H842.7 V759.6 H844 L847 770 H825 L829.8 759.6 H831.3 Z" fill="#fcfeff"/>
<path d="M830.6 760.2 H843 L846.2 769.9 H826 Z" fill="#ff6a00"/>
<path d="M830.4 760 H843.2 V762 H830 Z" fill="#ffb27a" opacity="0.8"/>
<ellipse cx="836.8" cy="761.6" rx="3.6" ry="1.3" fill="#fcfeff"/>
<path d="M831.9 755.8 H842.1 V758.3 L840.6 759.3 L838.9 761.5 H834.2 L833.2 759.6 L831.9 758.2 Z" fill="#ff0000"/>
<rect x="826" y="772" width="20" height="3.9" fill="#4a4a4a"/>
<rect x="826" y="772" width="20" height="0.7" fill="#3c3c3c"/><rect x="826" y="775.2" width="20" height="0.7" fill="#3c3c3c"/>
<!-- grid -->
<rect x="873.6" y="756.6" width="18.8" height="18.8" fill="#fdfdfd" opacity="0.75"/>
<g stroke="#4a4a4a" stroke-width="1" fill="none">
<path d="M875.5 756.1 V775.7 M879.4 756.1 V775.7 M886.4 756.1 V775.7 M890.5 756.1 V775.7"/>
<path d="M873.1 758.4 H892.9 M873.1 762.5 H892.9 M873.1 769.5 H892.9 M873.1 773.4 H892.9"/>
</g>
<path d="M882.9 756.1 V775.7 M873.1 766 H892.9" stroke="#454545" stroke-width="1.7" fill="none"/>
<path d="M880 766 H886 M882.9 763 V769" stroke="#006400" stroke-width="1.8" fill="none"/>
<path d="M879.8 758.4 H875.5 V762.6" stroke="#e60000" stroke-width="1" fill="none"/>
<path d="M886.8 773.4 H890.5 V769.8" stroke="#e60000" stroke-width="1" fill="none"/>
</svg>
<div id="t_filters" class="abs" style="left:708.4px;top:758px;line-height:16px;">Filters</div>

<div class="abs btn" style="left:1144px;top:810px;"></div><div id="t_cancel" class="abs" style="left:1165.4px;top:818px;line-height:16px;">Cancel</div>
<div class="abs btn" style="left:1239px;top:810px;"></div><svg class="abs" style="left:1260px;top:818px" width="14" height="16" viewBox="1260 818 14 16"><path d="M1262.1 826.2 H1271.8 M1266.95 821.4 V831" stroke="#232629" stroke-width="1.9" fill="none"/></svg><div id="t_add" class="abs" style="left:1279.2px;top:818px;line-height:16px;">Add</div>
</div>
</body>
</html>
